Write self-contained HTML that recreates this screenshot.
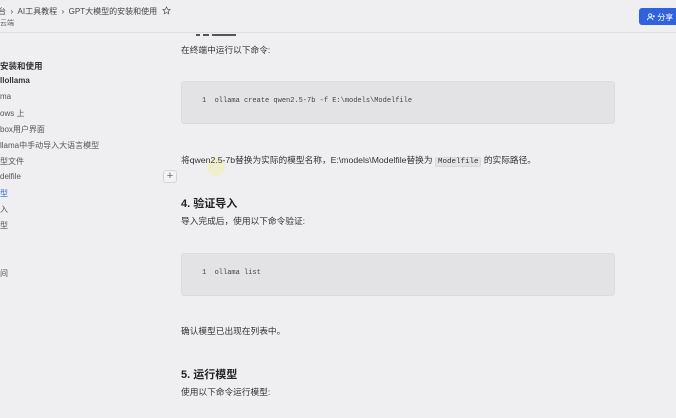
<!DOCTYPE html>
<html><head><meta charset="utf-8"><style>
*{margin:0;padding:0;box-sizing:border-box}
body{width:676px;height:418px;overflow:hidden;background:#efeff1;font-family:"Liberation Sans","Noto Sans CJK SC",sans-serif;color:#333;position:relative}
.a{position:absolute;white-space:nowrap}
.hdr{position:absolute;left:0;top:0;width:676px;height:33px;border-bottom:1px solid #e0e0e3;background:#efeff1;z-index:2}
.side{font-size:8px;color:#555}
.t{font-size:8.7px;color:#333}
.h{font-size:11px;font-weight:bold;color:#222}
.code{position:absolute;left:181px;width:434px;height:43px;background:#e3e3e6;border:1px solid #dcdcdf;border-radius:3px;font-family:"Liberation Mono",monospace;font-size:7px;color:#444;padding:15px 0 0 20px}
.mono{font-family:"Liberation Mono",monospace;background:#e3e3e6;border:1px solid #d8d8db;border-radius:2px;padding:0 2px;font-size:7.5px}
</style></head><body>
<div class="hdr"></div>
<div class="a" style="left:-2px;top:6px;font-size:8px;color:#444;z-index:3">台 &nbsp;›&nbsp; AI工具教程 &nbsp;›&nbsp; GPT大模型的安装和使用 &nbsp;<svg width="9" height="9" viewBox="0 0 10 10" style="vertical-align:-1px"><path d="M5 1l1.2 2.6 2.8.3-2.1 1.9.6 2.8L5 7.2 2.5 8.6l.6-2.8L1 3.9l2.8-.3z" fill="none" stroke="#555" stroke-width=".8"/></svg></div>
<div class="a" style="left:0;top:18px;font-size:7px;color:#666;z-index:3">云端</div>
<div class="a" style="left:639px;top:8px;width:40px;height:17px;background:#2f62dc;border-radius:3px;color:#fff;font-size:8px;padding:4px 0 0 8px;z-index:3"><svg width="8" height="8" viewBox="0 0 10 10" style="vertical-align:-1px"><circle cx="4" cy="3" r="2" fill="none" stroke="#fff"/><path d="M0.5 9c0-2 1.5-3 3.5-3s3.5 1 3.5 3M7 4h3M8.5 2.5v3" fill="none" stroke="#fff"/></svg> 分享</div>

<div class="a" style="left:196px;top:34px;width:4px;height:1.5px;background:#555"></div>
<div class="a" style="left:203px;top:34px;width:6px;height:1.5px;background:#555"></div>
<div class="a" style="left:212px;top:34px;width:24px;height:1.5px;background:#555"></div>

<div class="a side" style="left:0;top:60px;font-weight:bold;font-size:8.5px;color:#333">安装和使用</div>
<div class="a side" style="left:0;top:76px;font-weight:bold;color:#333">llollama</div>
<div class="a side" style="left:0;top:92px">ma</div>
<div class="a side" style="left:0;top:108px">ows 上</div>
<div class="a side" style="left:0;top:124px">box用户界面</div>
<div class="a side" style="left:0;top:140px">llama中手动导入大语言模型</div>
<div class="a side" style="left:0;top:156px">型文件</div>
<div class="a side" style="left:0;top:172px">delfile</div>
<div class="a side" style="left:0;top:188px;color:#2f62dc">型</div>
<div class="a side" style="left:0;top:204px">入</div>
<div class="a side" style="left:0;top:220px">型</div>
<div class="a side" style="left:0;top:268px">间</div>
<div class="a" style="left:163px;top:170px;width:14px;height:13px;border:1px solid #d6d6d9;border-radius:3px;background:#f3f3f5;font-size:11px;line-height:11px;text-align:center;color:#666">+</div>

<div class="a t" style="left:181px;top:43px">在终端中运行以下命令:</div>
<div class="code" style="top:81px">1&nbsp; ollama create qwen2.5-7b -f E:\models\Modelfile</div>
<div class="a" style="left:207px;top:158px;width:18px;height:18px;border-radius:50%;background:rgba(240,240,160,.45)"></div>
<div class="a t" style="left:181px;top:153px">将qwen2.5-7b替换为实际的模型名称，E:\models\Modelfile替换为 <span class="mono">Modelfile</span> 的实际路径。</div>
<div class="a h" style="left:181px;top:195px">4. 验证导入</div>
<div class="a t" style="left:181px;top:214px">导入完成后，使用以下命令验证:</div>
<div class="code" style="top:253px">1&nbsp; ollama list</div>
<div class="a t" style="left:181px;top:324px">确认模型已出现在列表中。</div>
<div class="a h" style="left:181px;top:366px">5. 运行模型</div>
<div class="a t" style="left:181px;top:385px">使用以下命令运行模型:</div>
</body></html>
